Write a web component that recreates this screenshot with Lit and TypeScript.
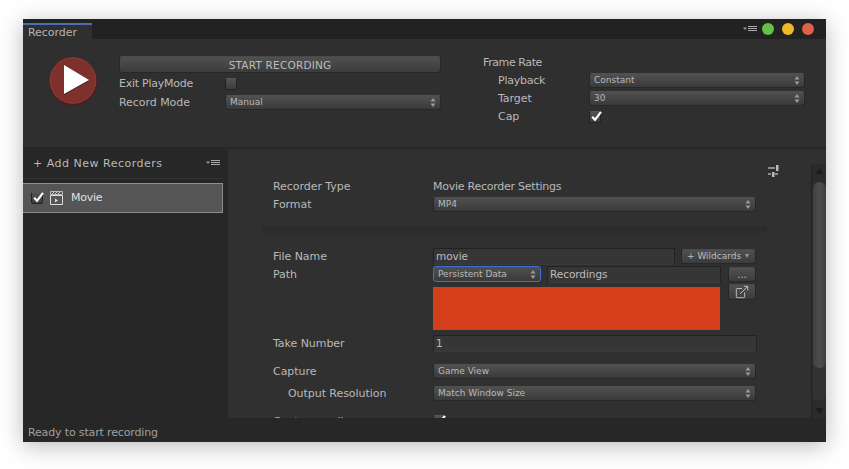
import { LitElement, css, html } from 'lit'
import { customElement } from 'lit/decorators.js'

const stepper = html`<svg class="stepper" width="6" height="11" viewBox="0 0 6 11"><path d="M3 1 L5.5 4.5 H0.5 Z M0.5 6.5 H5.5 L3 10 Z" fill="#9a9a9a"/></svg>`
const check = html`<svg class="tick" width="13" height="13" viewBox="0 0 13 13"><path d="M2.2 6.8 L5 9.8 L11 1.8" fill="none" stroke="#fff" stroke-width="2.2"/></svg>`
const menu = html`<svg width="14" height="6" viewBox="0 0 14 6"><path d="M0 1.5 H4 L2 4 Z" fill="#999"/><path d="M5 .5 H14 M5 2.5 H14 M5 4.5 H14" stroke="#aaa" stroke-width="1"/></svg>`

const select = (text: string, cls = '') => html`<div class="select ${cls}"><span>${text}</span>${stepper}</div>`

@customElement('app-root')
export class AppRoot extends LitElement {
  render() {
    return html`
      <div class="window">
        <div class="titlebar">
          <div class="tab">Recorder</div>
          <div class="spacer"></div>
          ${menu}
          <i class="light green"></i><i class="light yellow"></i><i class="light red"></i>
        </div>

        <div class="top">
          <svg class="play" width="50" height="50" viewBox="0 0 50 50">
            <circle cx="25" cy="25.5" r="24" fill="#4e1d1b"/>
            <circle cx="25" cy="24.5" r="23.5" fill="#7d302c"/>
            <circle cx="25" cy="24.5" r="22.5" fill="none" stroke="#8a3a36" stroke-width="1"/>
            <path d="M16 11 L41 25 L16 39 Z" fill="#45201e"/>
            <path d="M16 9 L41 24 L16 38 Z" fill="#fff"/>
          </svg>
          <div class="rec-group">
            <div class="button start">START RECORDING</div>
            <div class="top-row"><label class="tight">Exit PlayMode</label><div class="checkbox"></div></div>
            <div class="top-row">
              <label>Record Mode</label>
              ${select('Manual')}
            </div>
          </div>
          <div class="rate-group">
            <div class="rate-row"><label class="tighter">Frame Rate</label></div>
            <div class="rate-row sub"><label class="tight">Playback</label>${select('Constant')}</div>
            <div class="rate-row sub"><label>Target</label>${select('30')}</div>
            <div class="rate-row sub"><label>Cap</label><div class="checkbox">${check}</div></div>
          </div>
        </div>

        <div class="main">
          <div class="sidebar">
            <div class="side-head">
              <span>+ Add New Recorders</span>
              ${menu}
            </div>
            <div class="item">
              <div class="checkbox">${check}</div>
              <svg width="13" height="14" viewBox="0 0 13 14">
                <path d="M.5 4.5 H12.5 V13.5 H.5 Z" fill="none" stroke="#ddd"/>
                <path d="M.5 .5 H12.5 V3.5 H.5 Z" fill="none" stroke="#bbb"/>
                <path d="M2 3 L4 1 M5 3 L7 1 M8 3 L10 1" stroke="#ccc"/>
                <path d="M5 7.5 L8 9.5 L5 11.5 Z" fill="#ddd"/>
              </svg>
              <span class="tight">Movie</span>
            </div>
          </div>

          <div class="content">
            <div class="form">
              <svg class="presets" width="11" height="12" viewBox="0 0 11 12">
                <path d="M0 3 H7 M0 9 H3 M7 9 H10" stroke="#aaa" stroke-width="1.4"/>
                <path d="M8 0 H10.5 V6 H8 Z M4 7 H6.5 V12 H4 Z" fill="#bbb"/>
              </svg>
              <div class="row"><label>Recorder Type</label><span class="tight">Movie Recorder Settings</span></div>
              <div class="row"><label>Format</label>${select('MP4')}</div>
              <div class="band"></div>

              <div class="row">
                <label>File Name</label>
                <div class="cols">
                  <div class="input name">movie</div>
                  <div class="button wild"><span>+ Wildcards</span><b class="caret"></b></div>
                </div>
              </div>
              <div class="row">
                <label>Path</label>
                <div class="cols">
                  ${select('Persistent Data', 'focus')}
                  <div class="input folder">Recordings</div>
                  <div class="button small dots">...</div>
                </div>
              </div>
              <div class="row tall">
                <div></div>
                <div class="cols top-align">
                  <div class="redacted"></div>
                  <div class="button small open">
                    <svg width="14" height="14" viewBox="0 0 16 15"><path d="M8 3.5 H2.5 a1 1 0 0 0 -1 1 V13 a1 1 0 0 0 1 1 H10 a1 1 0 0 0 1 -1 V8" fill="none" stroke="#ccc"/><path d="M6 9.5 L14 1.5 M10 1 H14.5 V5.5" fill="none" stroke="#ccc"/></svg>
                  </div>
                </div>
              </div>
              <div class="row take"><label>Take Number</label><div class="input">1</div></div>
              <div class="row capture"><label>Capture</label>${select('Game View')}</div>
              <div class="row output"><label class="indent">Output Resolution</label>${select('Match Window Size')}</div>
              <div class="row audio"><label>Capture audio</label><div class="checkbox">${check}</div></div>
            </div>
            <div class="scrollbar">
              <svg width="9" height="6" viewBox="0 0 9 6"><path d="M4.5 0 L9 6 H0 Z" fill="#1c1c1c"/></svg>
              <div class="track"><div class="thumb"></div></div>
              <svg width="9" height="6" viewBox="0 0 9 6"><path d="M0 0 H9 L4.5 6 Z" fill="#1c1c1c"/></svg>
            </div>
          </div>
        </div>

        <div class="status">Ready to start recording</div>
      </div>
    `
  }

  static styles = css`
    :host {
      display: block;
      box-sizing: border-box;
      width: 849px;
      height: 469px;
      padding: 19px 23px 0;
      background: #fff;
      font-family: 'DejaVu Sans', sans-serif;
      font-size: 11px;
      letter-spacing: -0.05px;
      color: #b9b9b9;
    }
    .window {
      display: flex;
      flex-direction: column;
      width: 803px;
      height: 423px;
      background: #2f2f2f;
      overflow: hidden;
      box-shadow: 0 4px 22px rgba(0, 0, 0, 0.28);
    }
    label, span {
      white-space: nowrap;
    }
    .tight {
      letter-spacing: -0.25px;
    }
    .tighter {
      letter-spacing: -0.4px;
    }

    /* title bar */
    .titlebar {
      display: flex;
      align-items: center;
      flex: none;
      height: 20px;
      padding-right: 12px;
      background: #222;
    }
    .tab {
      align-self: flex-end;
      box-sizing: border-box;
      width: 69px;
      height: 16px;
      padding-left: 5px;
      border-top: 2px solid #4a6fb0;
      background: #2f2f2f;
      line-height: 16px;
      color: #b4b4b4;
    }
    .spacer {
      flex: 1;
    }
    .titlebar svg {
      margin-right: -3px;
    }
    .light {
      width: 12px;
      height: 12px;
      margin-left: 8px;
      border-radius: 50%;
    }
    .green { background: #62c144; }
    .yellow { background: #eeb826; }
    .red { background: #e0604c; }

    /* recording controls */
    .top {
      display: flex;
      flex: none;
      box-sizing: border-box;
      height: 110px;
      padding-left: 25px;
      border-bottom: 2px solid #272727;
    }
    .play {
      flex: none;
      margin-top: 17px;
    }
    .rec-group {
      width: 322px;
      margin-left: 21px;
      padding-top: 17px;
    }
    .start {
      height: 17px;
      font-size: 10.5px;
      letter-spacing: 0.2px;
    }
    .top-row {
      display: grid;
      grid-template-columns: 106px 216px;
      align-items: center;
      height: 18px;
      margin-top: 1px;
    }
    .rate-group {
      width: 322px;
      margin-left: 42px;
      padding-top: 14px;
    }
    .rate-row {
      display: grid;
      grid-template-columns: 106px 216px;
      align-items: center;
      height: 18px;
    }
    .rate-row.sub {
      grid-template-columns: 91px 216px;
      padding-left: 15px;
    }
    .top-row .checkbox, .rate-row .checkbox {
      margin-top: 2px;
    }

    /* shared controls */
    .button {
      display: flex;
      align-items: center;
      justify-content: center;
      box-sizing: border-box;
      border: 1px solid #272727;
      border-top-color: #4a4a4a;
      border-radius: 3px;
      background: linear-gradient(#505050, #3c3c3c);
      color: #bdbdbd;
    }
    .select {
      display: flex;
      align-items: center;
      justify-content: space-between;
      box-sizing: border-box;
      height: 15px;
      padding: 0 4px;
      border: 1px solid #272727;
      border-top-color: #505050;
      border-radius: 3px;
      background: linear-gradient(#505050, #3a3a3a);
      font-size: 9px;
      letter-spacing: 0;
      color: #b9b9b9;
    }
    .select.focus {
      height: 16px;
      border: 1px solid #3f6fd0;
    }
    .stepper {
      flex: none;
    }
    .checkbox {
      position: relative;
      box-sizing: border-box;
      width: 12px;
      height: 12px;
      border: 1px solid #222;
      border-top-color: #565656;
      border-radius: 2px;
      background: linear-gradient(#525252, #3d3d3d);
    }
    .tick {
      position: absolute;
      top: -2px;
      left: 0;
    }
    .input {
      box-sizing: border-box;
      height: 17px;
      padding-left: 2px;
      border: 1px solid #222;
      border-bottom-color: #3a3a3a;
      background: #363636;
      line-height: 15px;
      font-size: 10.5px;
      color: #bcbcbc;
    }

    /* sidebar */
    .main {
      display: flex;
      flex: 1;
      min-height: 0;
    }
    .sidebar {
      flex: none;
      width: 205px;
      background: #272727;
    }
    .side-head {
      display: flex;
      align-items: center;
      justify-content: space-between;
      box-sizing: border-box;
      width: 200px;
      height: 30px;
      padding: 0 3px 2px 10px;
      border-bottom: 1px solid #333;
      letter-spacing: 0.5px;
    }
    .side-head span {
      margin-top: 2px;
    }
    .item {
      display: flex;
      align-items: center;
      box-sizing: border-box;
      width: 200px;
      height: 30px;
      margin-top: 4px;
      padding-left: 8px;
      border: 1px solid #8e8e8e;
      border-left: none;
      background: #555;
      color: #e0e0e0;
    }
    .item svg {
      flex: none;
    }
    .item > svg {
      margin-left: 7px;
    }
    .item > span {
      margin: -2px 0 0 8px;
    }

    /* settings form */
    .content {
      display: flex;
      flex: 1;
      min-width: 0;
      background: #303030;
    }
    .form {
      position: relative;
      flex: 1;
      box-sizing: border-box;
      padding: 28px 0 0 45px;
      overflow: hidden;
    }
    .presets {
      position: absolute;
      top: 16px;
      left: 540px;
    }
    .row {
      display: grid;
      grid-template-columns: 160px 323px;
      align-items: center;
      height: 18px;
    }
    .band {
      width: 505px;
      height: 7px;
      margin: 13px 0 14px -11px;
      background: #2c2c2c;
    }
    .cols {
      display: flex;
      align-items: center;
    }
    .top-align {
      align-items: flex-start;
    }
    .name {
      width: 242px;
    }
    .wild {
      justify-content: space-between;
      width: 75px;
      height: 15px;
      margin-left: 6px;
      padding: 0 6px 0 5px;
      font-size: 9px;
      letter-spacing: 0;
    }
    .caret {
      width: 0;
      height: 0;
      border-style: solid;
      border-width: 4px 2.5px 0;
      border-color: #999 transparent transparent;
    }
    .focus {
      width: 108px;
      flex: none;
    }
    .folder {
      width: 174px;
      margin-left: 6px;
    }
    .small {
      width: 28px;
      height: 15px;
    }
    .dots {
      margin-left: 7px;
      font-size: 10px;
    }
    .row.tall {
      align-items: start;
      height: 47px;
    }
    .redacted {
      width: 287px;
      height: 43px;
      margin-top: 4px;
      background: #d43e1b;
    }
    .open {
      height: 16px;
      margin: 1px 0 0 8px;
    }
    .take {
      margin-top: 4px;
    }
    .take .input {
      width: 324px;
    }
    .capture {
      margin-top: 10px;
    }
    .output {
      margin-top: 4px;
    }
    .indent {
      padding-left: 15px;
    }
    .audio {
      margin-top: 10px;
    }

    /* scrollbar */
    .scrollbar {
      display: flex;
      flex: none;
      flex-direction: column;
      align-items: center;
      box-sizing: border-box;
      width: 15px;
      margin-top: 15px;
      padding: 4px 0;
      border-left: 1px solid #232323;
      background: #2b2b2b;
    }
    .track {
      flex: 1;
      width: 13px;
      margin: 8px 0 7px;
      border-radius: 6px;
      background: #323232;
    }
    .thumb {
      height: 186px;
      border-radius: 6px;
      background: linear-gradient(90deg, #404040, #4c4c4c 50%, #3e3e3e);
    }

    .status {
      flex: none;
      height: 24px;
      padding-left: 5px;
      background: #272727;
      line-height: 29px;
      letter-spacing: -0.15px;
      color: #a0a0a0;
    }
  `
}
